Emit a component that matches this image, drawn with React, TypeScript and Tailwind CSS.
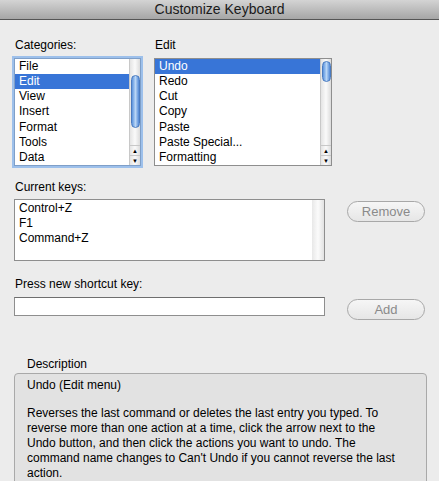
import React from 'react';

const categories = ['File', 'Edit', 'View', 'Insert', 'Format', 'Tools', 'Data'];
const commands = ['Undo', 'Redo', 'Cut', 'Copy', 'Paste', 'Paste Special...', 'Formatting'];
const keys = ['Control+Z', 'F1', 'Command+Z'];

function ScrollBar({ thumbTop, thumbHeight }: { thumbTop: number; thumbHeight: number }) {
  return (
    <div className="relative w-[11px] h-full border-l border-[#c8c8c8] bg-gradient-to-r from-[#e4e4e4] via-[#fafafa] to-[#dcdcdc] flex flex-col">
      <div className="flex-1" />
      {/* thumb sits over the track */}
      <div
        className="absolute left-[1px] w-[9px] rounded-full border border-[#4a7bc0] bg-gradient-to-r from-[#5b93dd] via-[#b9d6f6] to-[#4f86d4]"
        style={{ top: thumbTop, height: thumbHeight }}
      />
      <div className="h-[10px] flex items-center justify-center border-t border-[#c8c8c8] text-[6px] leading-none text-black">▲</div>
      <div className="h-[10px] flex items-center justify-center border-t border-[#c8c8c8] text-[6px] leading-none text-black">▼</div>
    </div>
  );
}

function ListBox({ items, selected, width, focused, thumbTop, thumbHeight }: { items: string[]; selected: number; width: string; focused?: boolean; thumbTop: number; thumbHeight: number }) {
  return (
    <div className={`${width} h-[108px] border bg-white flex ${focused ? 'border-[#7f9fc8] shadow-[0_0_0_2px_#9dc0eb]' : 'border-[#8e8e8e]'}`}>
      <div className="flex-1 flex flex-col">
        {items.map((it, i) => (
          <div
            key={it}
            className={`h-[15.2px] leading-[15px] pl-[4px] text-[12px] ${i === selected ? 'bg-[#3875d7] text-white' : 'text-black'}`}
          >
            {it}
          </div>
        ))}
      </div>
      <ScrollBar thumbTop={thumbTop} thumbHeight={thumbHeight} />
    </div>
  );
}

function AquaButton({ label }: { label: string }) {
  return (
    <button className="w-[78px] h-[21px] rounded-full border border-[#a8a8a8] bg-gradient-to-b from-[#f6f6f6] to-[#e6e6e6] text-[13px] text-[#8a8a8a] leading-none">
      {label}
    </button>
  );
}

export default function App() {
  return (
    <div className="w-[439px] h-[481px] bg-[#ececec] overflow-hidden text-black" style={{ fontFamily: '"Liberation Sans", Arial, sans-serif' }}>
      {/* Title bar */}
      <div className="h-[20px] bg-gradient-to-b from-[#d4d4d4] to-[#a6a6a6] border-b border-[#555555] flex items-center justify-center text-[14px] text-[#1a1a1a]">
        Customize Keyboard
      </div>

      <div className="px-[14px]">
        {/* Category / command lists */}
        <div className="flex gap-[13px] mt-[18px]">
          <div className="flex flex-col">
            <div className="text-[12px] h-[15px] leading-[15px] pl-[1px] mb-[5px]">Categories:</div>
            <ListBox items={categories} selected={1} width="w-[127px]" focused thumbTop={16} thumbHeight={53} />
          </div>
          <div className="flex flex-col">
            <div className="text-[12px] h-[15px] leading-[15px] pl-[1px] mb-[5px]">Edit</div>
            <ListBox items={commands} selected={0} width="w-[178px]" thumbTop={2} thumbHeight={21} />
          </div>
        </div>

        {/* Current keys */}
        <div className="mt-[14px] text-[12px] h-[15px] leading-[15px] pl-[1px]">Current keys:</div>
        <div className="flex items-start mt-[4px]">
          <div className="w-[316px] h-[62px] border border-[#8e8e8e] bg-white flex">
            <div className="flex-1 flex flex-col pt-[1px]">
              {keys.map((k) => (
                <div key={k} className="h-[15px] leading-[15px] pl-[4px] text-[12px]">{k}</div>
              ))}
            </div>
            <div className="w-[12px] h-full bg-gradient-to-r from-[#e8e8e8] via-[#fbfbfb] to-[#e2e2e2]" />
          </div>
          <div className="ml-[22px]">
            <AquaButton label="Remove" />
          </div>
        </div>

        {/* New shortcut */}
        <div className="mt-[16px] text-[12px] h-[15px] leading-[15px] pl-[1px]">Press new shortcut key:</div>
        <div className="flex items-start mt-[5px]">
          <div className="w-[316px] h-[19px] border border-[#8e8e8e] border-t-[#6e6e6e] bg-white" />
          <div className="ml-[22px]">
            <AquaButton label="Add" />
          </div>
        </div>

        {/* Description */}
        <div className="mt-[36px] pl-[13px] text-[12px] h-[15px] leading-[15px]">Description</div>
        <div className="mt-[1px] w-[413px] h-[120px] rounded-t-[4px] border border-[#a9a9a9] bg-[#e2e2e2] px-[12px] pt-[4px] text-[12px] leading-[15px]">
          <p>Undo (Edit menu)</p>
          <p className="mt-[13px] w-[372px]">
            Reverses the last command or deletes the last entry you typed. To reverse more than one action at a time, click the arrow next to the Undo button, and then click the actions you want to undo. The command name changes to Can't Undo if you cannot reverse the last action.
          </p>
        </div>
      </div>
    </div>
  );
}
